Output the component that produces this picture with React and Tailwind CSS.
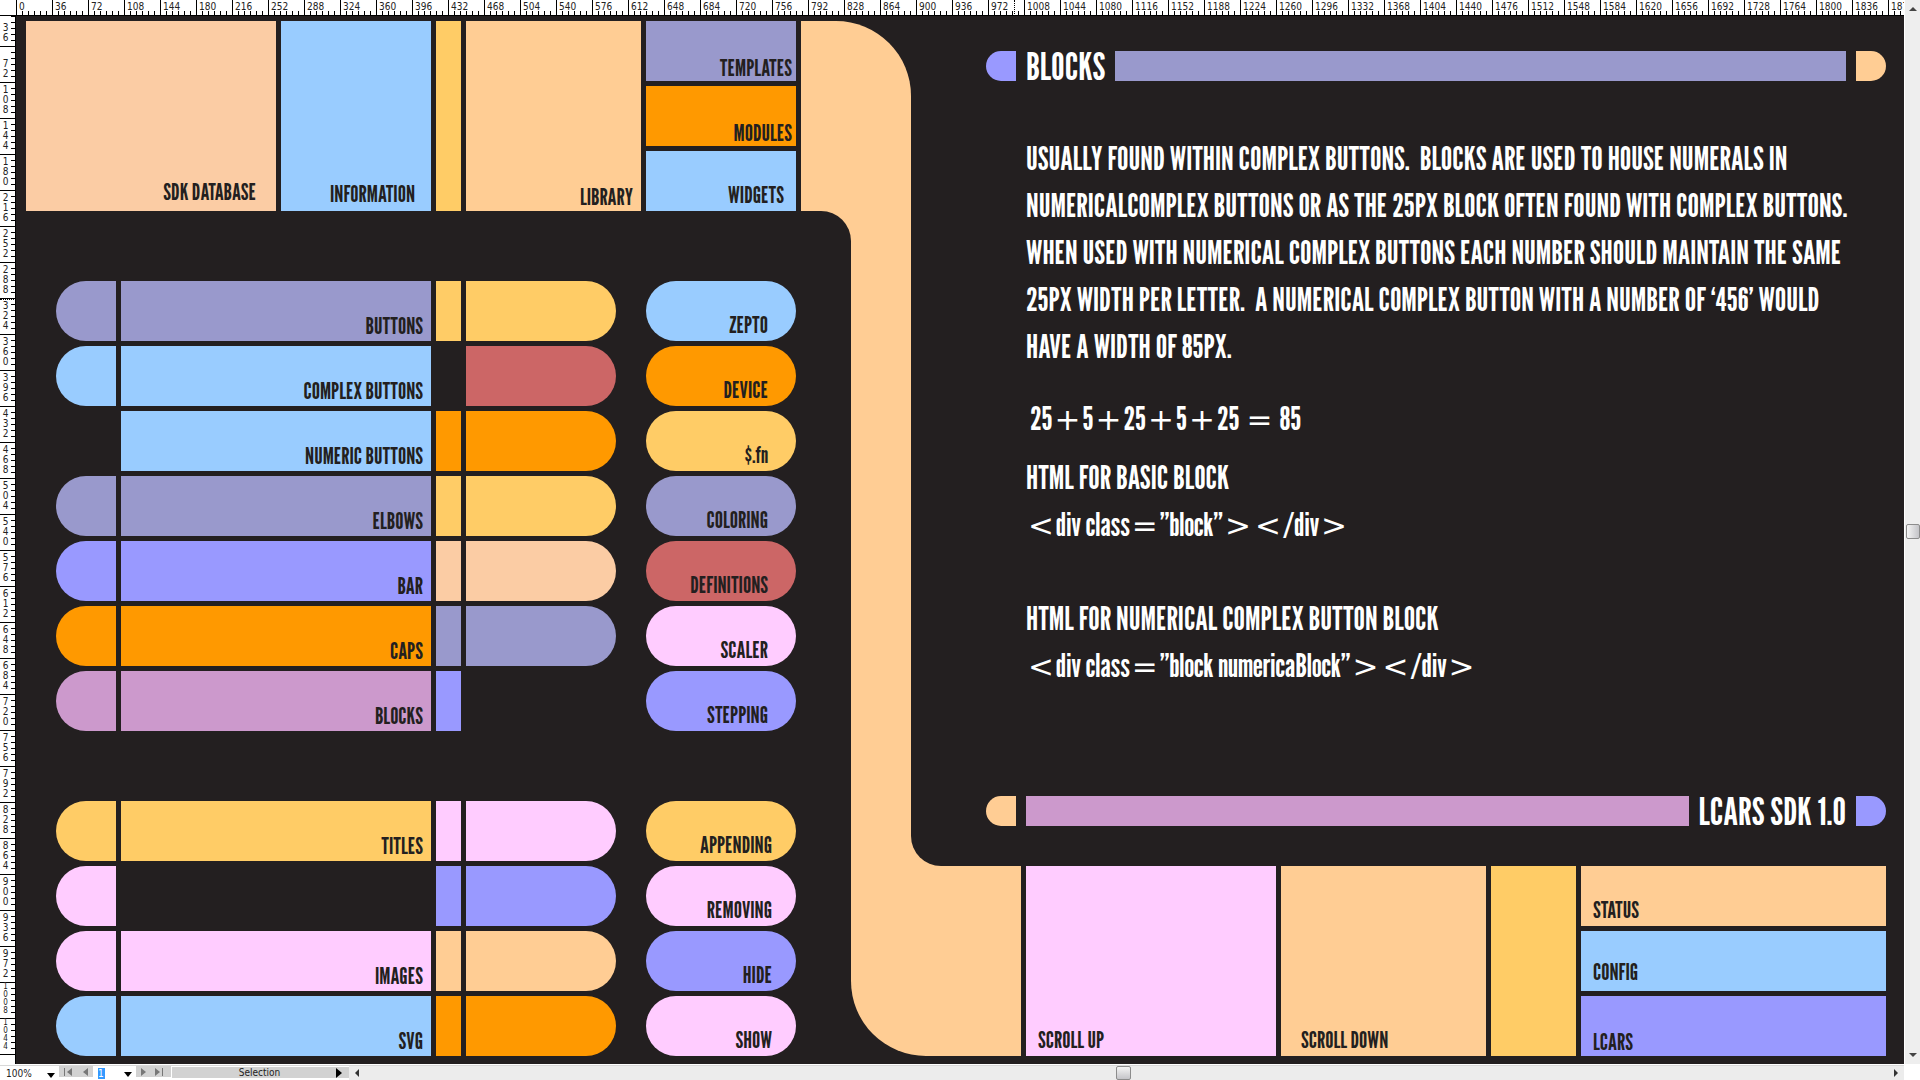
const mainRows = [
  { label: 'BUTTONS', cap: 'bg-[#9999cc]', body: 'bg-[#9999cc]', block: 'bg-[#ffcc66]', end: 'bg-[#ffcc66]' },
  { label: 'COMPLEX BUTTONS', cap: 'bg-[#99ccff]', body: 'bg-[#99ccff]', block: '', end: 'bg-[#cc6666]' },
  { label: 'NUMERIC BUTTONS', cap: '', body: 'bg-[#99ccff]', block: 'bg-[#ff9900]', end: 'bg-[#ff9900]' },
  { label: 'ELBOWS', cap: 'bg-[#9999cc]', body: 'bg-[#9999cc]', block: 'bg-[#ffcc66]', end: 'bg-[#ffcc66]' },
  { label: 'BAR', cap: 'bg-[#9999ff]', body: 'bg-[#9999ff]', block: 'bg-[#fbcca4]', end: 'bg-[#fbcca4]' },
  { label: 'CAPS', cap: 'bg-[#ff9900]', body: 'bg-[#ff9900]', block: 'bg-[#9999cc]', end: 'bg-[#9999cc]' },
  { label: 'BLOCKS', cap: 'bg-[#cc99cc]', body: 'bg-[#cc99cc]', block: 'bg-[#9999ff]', end: '' },
];

const mediaRows = [
  { label: 'TITLES', cap: 'bg-[#ffcc66]', body: 'bg-[#ffcc66]', block: 'bg-[#ffccff]', end: 'bg-[#ffccff]' },
  { label: '', cap: 'bg-[#ffccff]', body: '', block: 'bg-[#9999ff]', end: 'bg-[#9999ff]' },
  { label: 'IMAGES', cap: 'bg-[#ffccff]', body: 'bg-[#ffccff]', block: 'bg-[#ffcd94]', end: 'bg-[#ffcd94]' },
  { label: 'SVG', cap: 'bg-[#99ccff]', body: 'bg-[#99ccff]', block: 'bg-[#ff9900]', end: 'bg-[#ff9900]' },
];

const mainPills = [
  { label: 'ZEPTO', color: 'bg-[#99ccff]' },
  { label: 'DEVICE', color: 'bg-[#ff9900]' },
  { label: '$.fn', color: 'bg-[#ffcc66]' },
  { label: 'COLORING', color: 'bg-[#9999cc]' },
  { label: 'DEFINITIONS', color: 'bg-[#cc6666]' },
  { label: 'SCALER', color: 'bg-[#ffccff]' },
  { label: 'STEPPING', color: 'bg-[#9999ff]' },
];

const mediaPills = [
  { label: 'APPENDING', color: 'bg-[#ffcc66]' },
  { label: 'REMOVING', color: 'bg-[#ffccff]' },
  { label: 'HIDE', color: 'bg-[#9999ff]' },
  { label: 'SHOW', color: 'bg-[#ffccff]' },
];

const topTicks = Array.from({ length: 53 }, (_, i) => i * 36);
const sideTicks = Array.from({ length: 29 }, (_, i) => (i + 1) * 36);

function TopRuler() {
  return (
    <div className="relative flex h-4 overflow-hidden border-b border-black bg-white pl-4">
      {topTicks.map((n) => (
        <div key={n} className="flex w-9 shrink-0 items-end border-l border-black">
          <span className="relative z-10 w-0 self-start whitespace-nowrap pl-[2px] text-[10px] leading-[13px] text-[#222]">{n}</span>
          <div className="-ml-[2px] flex h-1 flex-1 justify-between pl-[5px]">
            {[1, 2, 3, 4, 5].map((t) => (
              <span key={t} className="mr-[5px] w-px shrink-0 bg-black" />
            ))}
          </div>
        </div>
      ))}
      <span className="absolute left-[1014px] top-0 h-4 border-l border-dotted border-black" />
    </div>
  );
}

function SideRuler() {
  return (
    <div className="relative w-4 shrink-0 border-r border-black bg-white">
      <div className="absolute inset-0 -top-[5px] overflow-hidden">
        {sideTicks.map((n) => (
          <div key={n} className="flex h-9 justify-between border-b border-black pl-[2px]">
            <div className={'flex w-[7px] flex-col items-center justify-end pb-[3px] text-[#222] ' + (n < 1000 ? 'text-[10px] leading-[10px]' : 'text-[8px] leading-[8px]')}>
              {String(n).split('').map((d, i) => (
                <span key={i}>{d}</span>
              ))}
            </div>
            <div className="flex w-1 flex-col justify-between pt-[5px]">
              {[1, 2, 3, 4, 5].map((t) => (
                <span key={t} className="mb-[5px] h-px shrink-0 bg-black" />
              ))}
            </div>
          </div>
        ))}
      </div>
      <span className="absolute left-0 top-[283px] w-4 border-t border-dotted border-black" />
    </div>
  );
}

function Tile({ label, className }) {
  return (
    <button type="button" className={'flex items-end text-[23px] leading-[26px] ' + className}>
      {label}
    </button>
  );
}

function ComplexRow({ label, cap, body, block, end }) {
  const Tag = label ? 'button' : 'div';
  return (
    <Tag className="grid h-[60px] grid-cols-[60px_310px_25px_150px] gap-[5px] text-[23px] leading-[26px]">
      <span className={'rounded-l-[30px] ' + cap} />
      <span className={'flex items-end justify-end pb-[2px] pr-2 ' + body}>{label}</span>
      <span className={block} />
      <span className={'rounded-r-[30px] ' + end} />
    </Tag>
  );
}

function Menu({ rows, pills, pillPad }) {
  return (
    <div className="mt-[70px] flex gap-[30px] pl-[30px]">
      <div className="flex flex-col gap-[5px]">
        {rows.map((r, i) => (
          <ComplexRow key={i} {...r} />
        ))}
      </div>
      <div className="flex flex-col gap-[5px]">
        {pills.map((p) => (
          <Tile key={p.label} label={p.label} className={'h-[60px] w-[150px] justify-end rounded-[30px] pb-[3px] ' + pillPad + ' ' + p.color} />
        ))}
      </div>
    </div>
  );
}

function Sym({ children }) {
  return <span className="mx-[2px] font-['DejaVu_Sans'] text-[31px] leading-none">{children}</span>;
}

function Arrow({ points, className }) {
  return (
    <svg viewBox="0 0 10 10" className={'h-[10px] w-[10px] ' + className} fill="currentColor">
      <polygon points={points} />
    </svg>
  );
}

function NavButton({ label, points, bar }) {
  return (
    <button type="button" aria-label={label} className="text-[#777]">
      <svg viewBox="0 0 10 10" className="h-[10px] w-[10px]" fill="currentColor">
        <polygon points={points} />
        {bar !== undefined && <rect x={bar} y="1" width="1" height="8" />}
      </svg>
    </button>
  );
}

function StatusBar() {
  return (
    <div className="flex h-4 border-t border-white bg-white text-[#222]">
      <div className="flex min-w-0 flex-1 border-t border-[#d8d8d8]">
        <div className="flex w-[59px] items-center bg-white pl-[6px] pt-[2px]">
          <input aria-label="Zoom" defaultValue="100%" className="h-3 w-10 bg-transparent text-[10px] leading-3 outline-none" />
          <Arrow points="1,4 9,4 5,9" className="text-black" />
        </div>
        <div className="flex h-[11px] w-[34px] justify-around bg-[#d2d2d2]">
          <NavButton label="First artboard" points="9,1 9,9 4,5" bar={1} />
          <NavButton label="Previous artboard" points="8,1 8,9 3,5" />
        </div>
        <div className="flex w-[43px] items-center bg-white pl-[5px]">
          <input aria-label="Artboard" defaultValue="1" className="h-[11px] w-[7px] bg-[#3399ff] text-[10px] leading-[11px] text-white outline-none" />
          <Arrow points="1,4 9,4 5,9" className="ml-[18px] text-black" />
        </div>
        <div className="flex h-[11px] w-[35px] justify-around bg-[#d2d2d2] pr-1">
          <NavButton label="Next artboard" points="2,1 2,9 7,5" />
          <NavButton label="Last artboard" points="1,1 1,9 6,5" bar={8} />
        </div>
        <button type="button" className="flex h-3 w-[178px] items-center border-l border-t border-white bg-[#d2d2d2] pl-3 pr-1 text-[10px] leading-3">
          <span className="flex-1 pt-px">Selection</span>
          <Arrow points="1,0 1,10 7,5" className="text-black" />
        </button>
        <div className="flex flex-1 items-center bg-[#ececec] px-[3px]">
          <button type="button" aria-label="Scroll left">
            <Arrow points="7,1 7,9 3,5" className="text-[#333]" />
          </button>
          <div className="flex flex-1 items-center">
            <span className="flex-[750]" />
            <span className="h-[14px] w-[15px] rounded-[2px] border border-[#8c8c8c] bg-gradient-to-b from-[#f5f5f5] to-[#c4c4c8]" />
            <span className="flex-[755]" />
          </div>
          <button type="button" aria-label="Scroll right">
            <Arrow points="3,1 3,9 7,5" className="text-[#333]" />
          </button>
        </div>
      </div>
      <span className="w-4 bg-white" />
    </div>
  );
}

function VerticalScroll() {
  return (
    <div className="relative z-20 -mt-4 flex w-4 shrink-0 flex-col items-center border-l border-white bg-[#eeeeee] py-[3px]">
      <button type="button" aria-label="Scroll up">
        <Arrow points="1,8 9,8 5,4" className="text-[#444]" />
      </button>
      <span className="flex-[508]" />
      <span className="h-[15px] w-[14px] rounded-[2px] border border-[#8c8c8c] bg-gradient-to-r from-[#f5f5f5] to-[#c4c4c8]" />
      <span className="flex-[510]" />
      <button type="button" aria-label="Scroll down">
        <Arrow points="1,2 9,2 5,6" className="text-[#444]" />
      </button>
    </div>
  );
}

export default function App() {
  return (
    <div className="flex min-h-screen w-full flex-col bg-[#231f20] font-['DejaVu_Sans_Condensed','DejaVu_Sans',sans-serif]">
      <TopRuler />
      <div className="flex flex-1">
        <SideRuler />
        <main className="flex min-w-0 flex-1 pb-2 pl-[10px] pr-[18px] pt-[5px] font-['League_Gothic','Antonio','Roboto_Condensed',sans-serif] text-[#231f20]">
          <section className="w-[825px] shrink-0">
            <div className="flex h-[190px] gap-[5px]">
              <Tile label="SDK DATABASE" className="w-[250px] justify-end bg-[#fbcca4] pb-[6px] pr-5" />
              <Tile label="INFORMATION" className="w-[150px] justify-end bg-[#99ccff] pb-1 pr-4" />
              <span className="w-[25px] bg-[#ffcc66]" />
              <Tile label="LIBRARY" className="w-[175px] justify-end bg-[#ffcd94] pb-px pr-2" />
              <div className="grid w-[150px] grid-rows-3 gap-[5px]">
                <Tile label="TEMPLATES" className="justify-end bg-[#9999cc] pr-1" />
                <Tile label="MODULES" className="justify-end bg-[#ff9900] pr-1" />
                <Tile label="WIDGETS" className="justify-end bg-[#99ccff] pb-[3px] pr-3" />
              </div>
            </div>
            <div className="flex justify-between">
              <nav>
                <Menu rows={mainRows} pills={mainPills} pillPad="pr-7" />
                <Menu rows={mediaRows} pills={mediaPills} pillPad="pr-6" />
              </nav>
              <div className="h-[30px] w-[30px] bg-[#ffcd94]">
                <div className="h-full rounded-tr-[30px] bg-[#231f20]" />
              </div>
            </div>
          </section>

          <div className="flex w-[60px] shrink-0 flex-col">
            <div className="h-[190px] w-[110px] self-end rounded-tr-[75px] bg-[#ffcd94]" />
            <div className="flex-1 bg-[#ffcd94]" />
            <div className="h-[190px] w-[170px] self-start rounded-bl-[75px] bg-[#ffcd94]" />
          </div>

          <section className="flex min-w-0 flex-1 flex-col">
            <header className="ml-[75px] mt-[30px] flex h-[30px] gap-[10px]">
              <span className="w-[30px] rounded-l-[15px] bg-[#9999ff]" />
              <h1 className="text-[38px] leading-[31px] text-white">BLOCKS</h1>
              <span className="flex-1 bg-[#9999cc]" />
              <span className="w-[30px] rounded-r-[15px] bg-[#ffcd94]" />
            </header>

            <article className="ml-[115px] mt-[54px] flex-1 whitespace-pre-wrap text-[32px] leading-[47px] text-white">
              <p>
                {'USUALLY FOUND WITHIN COMPLEX BUTTONS.  BLOCKS ARE USED TO HOUSE NUMERALS IN\nNUMERICALCOMPLEX BUTTONS OR AS THE 25PX BLOCK OFTEN FOUND WITH COMPLEX BUTTONS.\nWHEN USED WITH NUMERICAL COMPLEX BUTTONS EACH NUMBER SHOULD MAINTAIN THE SAME\n25PX WIDTH PER LETTER.  A NUMERICAL COMPLEX BUTTON WITH A NUMBER OF ‘456’ WOULD\nHAVE A WIDTH OF 85PX.'}
              </p>
              <p className="mt-[25px] pl-1">
                25<Sym>+</Sym>5<Sym>+</Sym>25<Sym>+</Sym>5<Sym>+</Sym>25 <Sym>=</Sym> 85
              </p>
              <h2 className="mt-3">HTML FOR BASIC BLOCK</h2>
              <p>
                <Sym>&lt;</Sym>div class<Sym>=</Sym>”block”<Sym>&gt;</Sym><Sym>&lt;</Sym>/div<Sym>&gt;</Sym>
              </p>
              <h2 className="mt-[47px]">HTML FOR NUMERICAL COMPLEX BUTTON BLOCK</h2>
              <p>
                <Sym>&lt;</Sym>div class<Sym>=</Sym>”block numericaBlock”<Sym>&gt;</Sym><Sym>&lt;</Sym>/div<Sym>&gt;</Sym>
              </p>
            </article>

            <footer>
              <div className="ml-[75px] flex h-[30px] gap-[10px]">
                <span className="w-[30px] rounded-l-[15px] bg-[#ffcd94]" />
                <span className="flex-1 bg-[#cc99cc]" />
                <span className="text-[38px] leading-[31px] text-white">LCARS SDK 1.0</span>
                <span className="w-[30px] rounded-r-[15px] bg-[#9999ff]" />
              </div>
              <div className="mt-[10px] h-[30px] w-[30px] bg-[#ffcd94]">
                <div className="h-full rounded-bl-[30px] bg-[#231f20]" />
              </div>
              <div className="ml-[115px] grid h-[190px] grid-cols-[250fr_205fr_85fr_305fr] gap-[5px]">
                <Tile label="SCROLL UP" className="bg-[#ffccff] pb-[3px] pl-3" />
                <Tile label="SCROLL DOWN" className="bg-[#ffcd94] pb-[3px] pl-5" />
                <span className="bg-[#ffcc66]" />
                <div className="grid grid-rows-3 gap-[5px]">
                  <Tile label="STATUS" className="bg-[#ffcd94] pb-[3px] pl-3" />
                  <Tile label="CONFIG" className="bg-[#99ccff] pb-[6px] pl-3" />
                  <Tile label="LCARS" className="bg-[#9999ff] pb-px pl-3" />
                </div>
              </div>
            </footer>
          </section>
        </main>
        <VerticalScroll />
      </div>
      <StatusBar />
    </div>
  );
}
